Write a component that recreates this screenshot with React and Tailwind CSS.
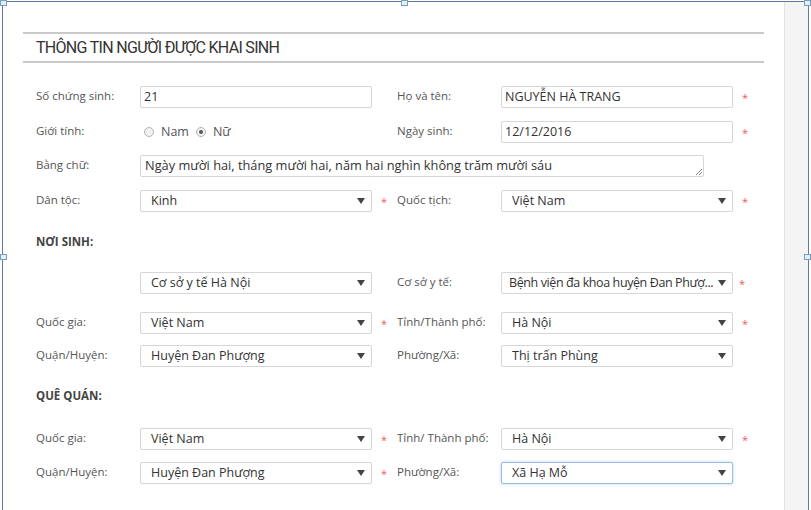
const font = { fontFamily: "'Open Sans', 'Noto Sans', sans-serif" };

function Star() {
  return <span className="text-[#ef5b5b] text-[11px] leading-none">*</span>;
}

function Arrow() {
  return (
    <svg width="8" height="6" viewBox="0 0 8 6" className="shrink-0">
      <path d="M0 0 L8 0 L4 6 Z" fill="#444" />
    </svg>
  );
}

function TextBox({ value }) {
  return (
    <div className="w-[232px] h-[22px] border border-[#d6d6d6] rounded-[2px] flex items-center pl-[3px] text-[12.5px] text-[#333] bg-white">
      {value}
    </div>
  );
}

function Select({ value, focus, pl = 'pl-[10px]', cls = '' }) {
  return (
    <div
      className={`w-[232px] h-[22px] border rounded-[2px] flex items-center ${pl} pr-[6px] text-[12.5px] text-[#333] bg-white ${
        focus ? 'border-[#98bde3] shadow-[0_0_3px_rgba(102,160,220,0.5)]' : 'border-[#d6d6d6]'
      }`}
    >
      <span className={`flex-1 whitespace-nowrap ${cls}`}>{value}</span>
      <Arrow />
    </div>
  );
}

function Label({ children }) {
  return <div className="w-[104px] shrink-0 text-[11.5px] text-[#555] -mt-[3px]">{children}</div>;
}

function StarCell({ on, pl = 'pl-[9px]' }) {
  return <div className={`w-[25px] shrink-0 ${pl} flex items-center`}>{on && <Star />}</div>;
}

function Row({ mt, l, lf, ls, r, rf, rs, rsPl }) {
  return (
    <div className={`flex items-center h-[22px] ${mt}`}>
      <Label>{l}</Label>
      <div className="w-[232px] shrink-0">{lf}</div>
      <StarCell on={ls} />
      <Label>{r}</Label>
      <div className="w-[232px] shrink-0">{rf}</div>
      <StarCell on={rs} pl={rsPl} />
    </div>
  );
}

function Radio({ checked, label }) {
  return (
    <div className="flex items-center">
      <span className="w-[10px] h-[10px] rounded-full border border-[#b3b3b3] bg-[#f1f1f1] flex items-center justify-center">
        {checked && <span className="w-[4px] h-[4px] rounded-full bg-[#555]" />}
      </span>
      <span className="ml-[7px] text-[12.5px] text-[#555]">{label}</span>
    </div>
  );
}

function Handle({ pos }) {
  return <div className={`absolute w-[7px] h-[6px] bg-[#d9f3f7] border border-[#7f9cbf] ${pos}`} />;
}

export default function App() {
  return (
    <div className="w-[811px] h-[510px] bg-white relative overflow-hidden pt-px pl-[2px] pr-[2px]" style={font}>
      <div className="h-[509px] border-t border-l border-r border-[#5a7ba5] flex">
        <div className="flex-1 px-[20px]">
          <div className="mt-[30px] border-t-2 border-b-2 border-[#c9c9c9] h-[31px] flex items-center pl-[13px]">
            <span className="text-[16px] text-[#333] tracking-[-0.7px]" style={{ fontFamily: "Roboto, 'Noto Sans', sans-serif" }}>
              THÔNG TIN NGƯỜI ĐƯỢC KHAI SINH
            </span>
          </div>

          <div className="pl-[13px]">
            <Row mt="mt-[23px]" l="Số chứng sinh:" lf={<TextBox value="21" />} r="Họ và tên:" rf={<TextBox value="NGUYỄN HÀ TRANG" />} rs />
            <Row
              mt="mt-[13px]"
              l="Giới tính:"
              lf={
                <div className="flex items-center gap-[7px] pl-[4px]">
                  <Radio label="Nam" />
                  <Radio checked label="Nữ" />
                </div>
              }
              r="Ngày sinh:"
              rf={<TextBox value="12/12/2016" />}
              rs
            />
            <div className="flex items-center h-[22px] mt-[12px]">
              <Label>Bằng chữ:</Label>
              <div className="relative w-[564px] h-[22px] border border-[#d6d6d6] rounded-[2px] flex items-center pl-[4px] text-[12.8px] text-[#333] whitespace-nowrap">
                Ngày mười hai, tháng mười hai, năm hai nghìn không trăm mười sáu
                <svg width="7" height="7" viewBox="0 0 7 7" className="absolute right-[1px] bottom-[1px]">
                  <path d="M7 1 L1 7 M7 4 L4 7" stroke="#888" strokeWidth="1" />
                </svg>
              </div>
            </div>
            <Row mt="mt-[13px]" l="Dân tộc:" lf={<Select value="Kinh" />} ls r="Quốc tịch:" rf={<Select value="Việt Nam" />} rs />

            <div className="mt-[21px] h-[17px] text-[11.5px] font-bold text-[#444]">NƠI SINH:</div>

            <Row
              mt="mt-[22px]"
              l=""
              lf={<Select value="Cơ sở y tế Hà Nội" />}
              r="Cơ sở y tế:"
              rf={<Select value="Bệnh viện đa khoa huyện Đan Phượ..." pl="pl-[7px]" cls="tracking-[-0.4px]" />}
              rs
              rsPl="pl-[6px]"
            />
            <Row mt="mt-[18px]" l="Quốc gia:" lf={<Select value="Việt Nam" />} ls r="Tỉnh/Thành phố:" rf={<Select value="Hà Nội" />} rs />
            <Row mt="mt-[11px]" l="Quận/Huyện:" lf={<Select value="Huyện Đan Phượng" />} r="Phường/Xã:" rf={<Select value="Thị trấn Phùng" />} />

            <div className="mt-[20px] h-[17px] text-[11.5px] font-bold text-[#444]">QUÊ QUÁN:</div>

            <Row mt="mt-[24px]" l="Quốc gia:" lf={<Select value="Việt Nam" />} ls r="Tỉnh/ Thành phố:" rf={<Select value="Hà Nội" />} rs />
            <Row mt="mt-[12px]" l="Quận/Huyện:" lf={<Select value="Huyện Đan Phượng" />} ls r="Phường/Xã:" rf={<Select value="Xã Hạ Mỗ" focus />} />
          </div>
        </div>
        <div className="w-[24px] shrink-0 bg-[#f4f4f4] border-l border-[#e2e2e2]" />
      </div>

      <Handle pos="left-0 top-0" />
      <Handle pos="left-[401px] top-0" />
      <Handle pos="left-[804px] top-0" />
      <Handle pos="left-0 top-[254px]" />
      <Handle pos="left-[804px] top-[254px]" />
    </div>
  );
}
